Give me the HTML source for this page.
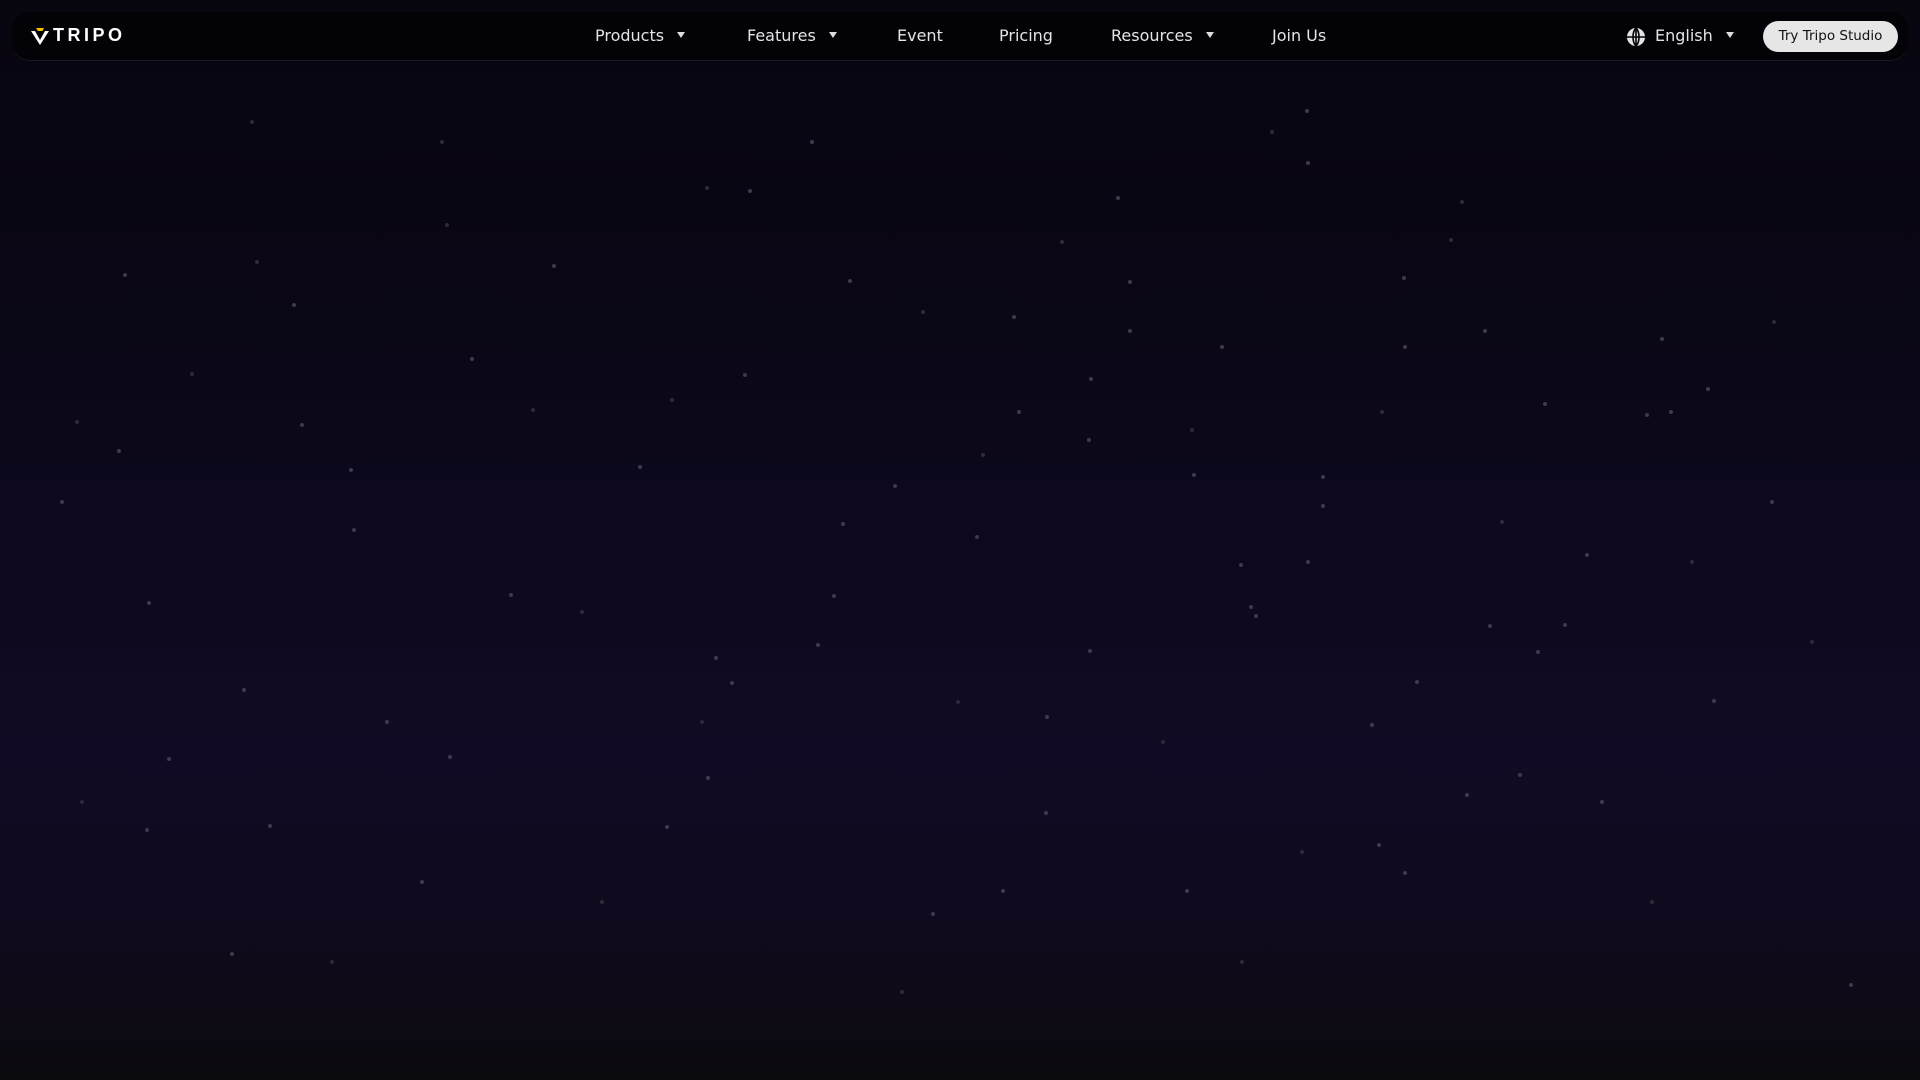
<!DOCTYPE html>
<html><head><meta charset="utf-8"><style>
html,body{margin:0;width:1920px;height:1080px;overflow:hidden}
body{background:linear-gradient(180deg,#07050e 0%,#0b0718 35%,#110a24 70%,#100a1e 85%,#0b0a0e 100%);font-family:"DejaVu Sans","Liberation Sans",sans-serif;color:#e8e8ea;position:relative}
.nav{position:absolute;left:12px;top:12px;width:1896px;height:48px;background:#030206;border-radius:18px;border-bottom:1px solid #1a1822}
.nav a{position:absolute;top:14px;font-size:16px;color:#e4e4e6;white-space:nowrap}
.car{display:inline-block;width:0;height:0;border-left:4.5px solid transparent;border-right:4.5px solid transparent;border-top:6px solid #ddd;margin-left:13px;vertical-align:3px}
.btn{position:absolute;left:1751px;top:9px;width:135px;height:31px;border-radius:16px;background:#e6e6e6;color:#111;font-size:13.5px;line-height:31px;text-align:center}
.stars{position:absolute;left:0;top:0;width:4px;height:4px;border-radius:50%;background:transparent}
</style></head><body>
<div class="nav">
 <svg style="position:absolute;left:18px;top:15px" width="20" height="18" viewBox="0 0 20 18"><path d="M6 1h8l-1.5 3H8z" fill="#f2c200"/><path d="M1 4h4l5 9 5-9h4l-9 14z" fill="#fff"/></svg>
 <span style="position:absolute;left:41px;top:13px;font-size:18px;font-weight:bold;letter-spacing:3.5px;color:#fff;font-family:'Liberation Sans',sans-serif">TRIPO</span>
 <a style="left:583px">Products<span class="car"></span></a>
 <a style="left:735px">Features<span class="car"></span></a>
 <a style="left:885px">Event</a>
 <a style="left:987px">Pricing</a>
 <a style="left:1099px">Resources<span class="car"></span></a>
 <a style="left:1260px">Join Us</a>
 <svg style="position:absolute;left:1614px;top:15px" width="20" height="20" viewBox="0 0 20 20"><circle cx="10" cy="10" r="9" fill="#e4e4e6"/><path d="M10 1v18M1 10h18M10 1c-4 4-4 14 0 18M10 1c4 4 4 14 0 18" stroke="#030206" stroke-width="1.6" fill="none"/></svg>
 <a style="left:1643px">English<span class="car"></span></a>
 <div class="btn">Try Tripo Studio</div>
</div>
<div class="stars" style="box-shadow:
810px 140px #3e3850,1306px 161px #3e3850,748px 189px #3e3850,1116px 196px #3e3850,552px 264px #3e3850,848px 279px #3e3850,1402px 276px #3e3850,1660px 337px #3e3850,1128px 329px #3e3850,292px 303px #3e3850,470px 357px #3e3850,1012px 315px #3e3850,743px 373px #3e3850,1089px 377px #3e3850,1220px 345px #3e3850,1403px 345px #3e3850,123px 273px #3e3850,1017px 410px #3e3850,1706px 387px #3e3850,638px 465px #3e3850,300px 423px #3e3850,349px 468px #3e3850,1087px 438px #3e3850,1645px 413px #3e3850,1321px 475px #3e3850,893px 484px #3e3850,1543px 402px #3e3850,841px 522px #3e3850,1321px 504px #3e3850,975px 535px #3e3850,147px 601px #3e3850,509px 593px #3e3850,1306px 560px #3e3850,832px 594px #3e3850,1249px 605px #3e3850,1585px 553px #3e3850,1563px 623px #3e3850,816px 643px #3e3850,730px 681px #3e3850,1088px 649px #3e3850,1415px 680px #3e3850,242px 688px #3e3850,714px 656px #3e3850,385px 720px #3e3850,1536px 650px #3e3850,167px 757px #3e3850,448px 755px #3e3850,1712px 699px #3e3850,1044px 811px #3e3850,268px 824px #3e3850,1377px 843px #3e3850,665px 825px #3e3850,145px 828px #3e3850,1001px 889px #3e3850,1403px 871px #3e3850,1518px 773px #3e3850,1185px 889px #3e3850,931px 912px #3e3850,230px 952px #3e3850,1849px 983px #3e3850,1465px 793px #3e3850,706px 776px #3e3850,1192px 473px #3e3850,1239px 563px #3e3850,352px 528px #3e3850,117px 449px #3e3850,1483px 329px #3e3850,1128px 280px #3e3850,1305px 109px #3e3850,1669px 410px #3e3850,1045px 715px #3e3850,1488px 624px #3e3850,1370px 723px #3e3850,1254px 614px #3e3850,1600px 800px #3e3850,420px 880px #3e3850,60px 500px #3e3850,1770px 500px #3e3850,
705px 186px #2e2a3a,445px 223px #2e2a3a,255px 260px #2e2a3a,1060px 240px #2e2a3a,921px 310px #2e2a3a,1190px 428px #2e2a3a,981px 453px #2e2a3a,670px 398px #2e2a3a,531px 408px #2e2a3a,1380px 410px #2e2a3a,1449px 238px #2e2a3a,1772px 320px #2e2a3a,75px 420px #2e2a3a,190px 372px #2e2a3a,580px 610px #2e2a3a,700px 720px #2e2a3a,956px 700px #2e2a3a,1161px 740px #2e2a3a,1300px 850px #2e2a3a,1500px 520px #2e2a3a,1690px 560px #2e2a3a,1810px 640px #2e2a3a,80px 800px #2e2a3a,330px 960px #2e2a3a,600px 900px #2e2a3a,900px 990px #2e2a3a,1240px 960px #2e2a3a,1650px 900px #2e2a3a,1270px 130px #2e2a3a,440px 140px #2e2a3a,250px 120px #2e2a3a,1460px 200px #2e2a3a"></div>
</body></html>
